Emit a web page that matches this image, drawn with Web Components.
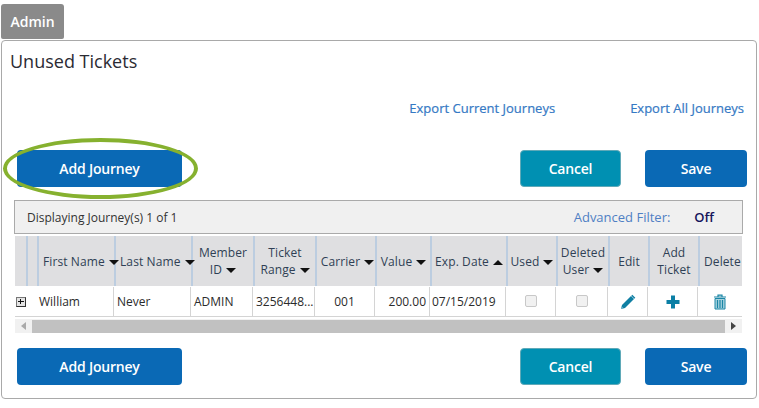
<!DOCTYPE html>
<html><head><meta charset="utf-8">
<style>
html,body{margin:0;padding:0;background:#fff}
body{font-family:"Open Sans","Liberation Sans",sans-serif;color:#333;width:759px;height:408px;overflow:hidden}
</style></head><body>
<template id="t-page"><style>
:host{display:block;padding:4px 0 0 1px}
.tab{display:inline-flex;box-sizing:border-box;width:63px;height:35px;background:#8a8a8a;color:#fff;font:600 14px "Open Sans",sans-serif;align-items:center;justify-content:center;border-radius:3px 3px 2px 2px;vertical-align:top}
.wrap{height:36px}
</style><div class="wrap"><div class="tab">Admin</div></div><slot></slot></template>

<template id="t-panel"><style>
:host{display:block;box-sizing:border-box;width:756px;height:359px;border:1px solid #a9a9a9;border-radius:4px;position:relative}
h1{font:400 18px/24px "Open Sans",sans-serif;color:#2b2b33;margin:8px 0 0 8px;height:24px}
.links{display:flex;justify-content:flex-end;gap:75px;margin:23px 12px 0 0;height:24px;align-items:center;font:400 13px "Open Sans",sans-serif;color:#3579c4;-webkit-text-stroke:.2px #3579c4}
.row{display:flex;align-items:flex-start;padding-left:15px;box-sizing:border-box;width:745px}
.top{margin-top:30px}.bottom{margin-top:15px}
.sp{flex:1}
.ring{position:absolute;left:1px;top:97px;width:195px;height:61px;box-sizing:border-box;border:4px solid #86b12f;border-radius:50%;pointer-events:none}
.gridwrap{margin:13px 0 0 12px}
.cancel{margin-right:24px}
</style>
<h1>Unused Tickets</h1>
<div class="links"><span>Export Current Journeys</span><span>Export All Journeys</span></div>
<div class="row top"><x-btn w="165">Add Journey</x-btn><span class="sp"></span><x-btn class="cancel" w="101" kind="teal">Cancel</x-btn><x-btn w="102">Save</x-btn></div>
<div class="ring"></div>
<div class="gridwrap"><x-filter></x-filter><x-grid></x-grid></div>
<div class="row bottom"><x-btn w="165">Add Journey</x-btn><span class="sp"></span><x-btn class="cancel" w="101" kind="teal">Cancel</x-btn><x-btn w="102">Save</x-btn></div>
</template>

<template id="t-btn"><style>
:host{display:flex;box-sizing:border-box;height:37px;background:#0a69b5;color:#fff;border-radius:4px;align-items:center;justify-content:center;font:600 14px "Open Sans",sans-serif;letter-spacing:-.2px}
:host([kind=teal]){background:#0090b2;border:1px solid #5fa9b8}
</style><slot></slot></template>

<template id="t-filter"><style>
:host{display:flex;box-sizing:border-box;width:729px;height:34px;background:#f0f0f0;border:1px solid #aaa;align-items:center;font:400 12px "Open Sans",sans-serif;color:#333;padding-left:12px}
.sp{flex:1}
.af{color:#4f7fc4;font-size:13px;margin-right:24px}
.off{color:#14145a;font-weight:600;font-size:13px;margin-right:28px}
</style><span>Displaying Journey(s) 1 of 1</span><span class="sp"></span><span class="af">Advanced Filter:</span><span class="off">Off</span></template>

<template id="t-grid"><style>
:host{display:block;width:727px;margin:2px 0 0 1px;font:400 12px "Open Sans",sans-serif;color:#333}
.g{display:grid;grid-template-columns:11px 11px 77px 77px 62px 62px 60px 55px 76px 50px 52px 40px 50px 43px;overflow:hidden}
.h{height:50px;background:#dfdfe1;color:#2f3f55}
.h>div{box-sizing:border-box;border-left:2px solid #bccde0;display:flex;align-items:center;justify-content:center;text-align:center;line-height:17px;white-space:nowrap;letter-spacing:.1px}
.h>div:first-child{border-left:0}
.h>div:last-child{justify-content:flex-start;padding-left:4px;overflow:hidden}
.h>div.nm{justify-content:flex-start;padding-left:4px;overflow:visible;letter-spacing:.1px}
.h>div.pl{padding-left:3px;overflow:visible}
.d{height:30px;margin-top:1px;border-bottom:1px solid #d4d4d4;box-sizing:border-box}
.d>div{box-sizing:border-box;border-right:1px solid #d4d4d4;display:flex;align-items:center;padding:0 3px;white-space:nowrap;color:#2b2b2b}
.d>div:last-child{border-right:0}
.d .c{justify-content:center}.d .r{justify-content:flex-end;padding:0 3px 0 1px}
.d .n{padding:0;border:0}
.d .w{padding-left:2px}
.d .dt{padding-left:2px}
.tri{display:inline-block;position:relative;z-index:2;width:0;height:0;border-left:5px solid transparent;border-right:5px solid transparent;border-top:5px solid #111;margin-left:4px;vertical-align:1px}
.tri.up{border-top:0;border-bottom:5px solid #111}
.plus{box-sizing:border-box;width:10px;height:10px;border:1px solid #777;border-right-color:#333;border-bottom-color:#333;background:#e4e4e4;margin-left:1px;position:relative}
.plus:before,.plus:after{content:"";position:absolute;background:#111}
.plus:before{left:1px;right:1px;top:3px;height:1px}.plus:after{top:1px;bottom:2px;left:3px;width:1px}
.cb{box-sizing:border-box;width:12px;height:12px;border:1px solid #c8c8c8;background:#f1f1f1;border-radius:2px;margin-top:-1px}
.sb{display:flex;height:14px;margin-top:2px;background:#f1f1f1;width:727px;align-items:center}
.ar{width:17px;height:14px;display:flex;align-items:center;justify-content:center}
.th{flex:1;height:13px;background:#c1c1c1}
svg{display:block}
</style>
<div class="g h">
<div></div><div></div>
<div class="nm"><span>First Name<i class="tri"></i></span></div>
<div class="nm"><span>Last Name<i class="tri"></i></span></div>
<div><span>Member<br>ID<i class="tri"></i></span></div>
<div><span>Ticket<br>Range<i class="tri"></i></span></div>
<div class="pl"><span>Carrier<i class="tri"></i></span></div>
<div><span>Value<i class="tri"></i></span></div>
<div><span>Exp. Date<i class="tri up"></i></span></div>
<div><span>Used<i class="tri"></i></span></div>
<div><span>Deleted<br>User<i class="tri"></i></span></div>
<div>Edit</div>
<div><span>Add<br>Ticket</span></div>
<div>Delete</div>
</div>
<div class="g d">
<div class="n"><span class="plus"></span></div><div class="n"></div>
<div class="w">William</div><div>Never</div><div>ADMIN</div><div>3256448...</div>
<div class="c">001</div><div class="r">200.00</div><div class="dt">07/15/2019</div>
<div class="c"><span class="cb"></span></div><div class="c"><span class="cb"></span></div>
<div class="c"><svg width="16" height="16" viewBox="0 0 16 16"><path d="M1 15l1-4L11 2l3 3-9 9z" fill="#0f7fa3"/><path d="M11.800 1.200l3 3" stroke="#0f7fa3" stroke-width="1.400"/><path d="M1 15l.7-2.600 1.900 1.900z" fill="#7fb8cc"/></svg></div>
<div class="c"><svg width="14" height="14" viewBox="0 0 14 14"><path d="M5 .5h4v4.500h4.500v4H9v4.500H5V9H.5V5H5z" fill="#0b7fa5"/></svg></div>
<div class="c"><svg width="14" height="16" viewBox="0 0 14 16"><path d="M1 3h12M5 3V1.200h4V3" fill="none" stroke="#1a86a6" stroke-width="1.200"/><path d="M2 4.500h10V15H2z" fill="#a9d2de" stroke="#1a86a6"/><path d="M4.500 6v8M7 6v8M9.500 6v8" stroke="#1a86a6" stroke-width="1.200"/></svg></div>
</div>
<div class="sb"><span class="ar"><svg width="5" height="8"><path d="M5 0v8L0 4z" fill="#aaa"/></svg></span><span class="th"></span><span class="ar"><svg width="5" height="8"><path d="M0 0v8l5-4z" fill="#444"/></svg></span></div>
</template>

<x-page><x-panel></x-panel></x-page>
<script>
function reg(name,tid,init){customElements.define(name,class extends HTMLElement{constructor(){super();this.attachShadow({mode:"open"}).appendChild(document.getElementById(tid).content.cloneNode(true));}connectedCallback(){if(init)init(this);}});}
reg("x-btn","t-btn",e=>{e.style.width=e.getAttribute("w")+"px"});
reg("x-filter","t-filter");
reg("x-grid","t-grid");
reg("x-panel","t-panel");
reg("x-page","t-page");
</script>
</body></html>
